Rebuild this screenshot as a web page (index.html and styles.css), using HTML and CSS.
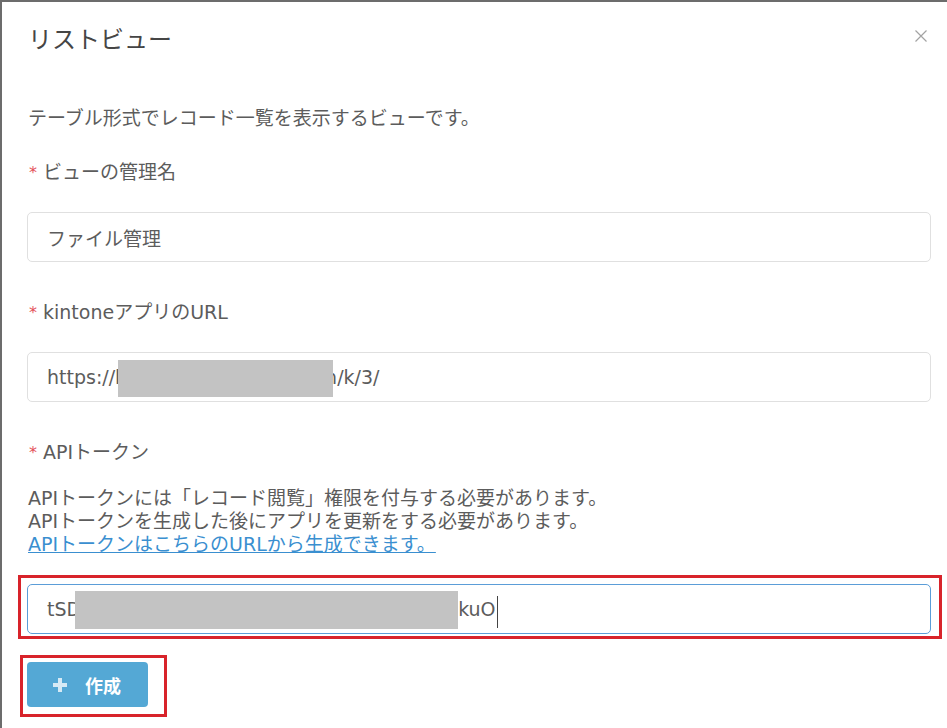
FILE: index.html
```html
<!DOCTYPE html>
<html lang="ja">
<head>
<meta charset="utf-8">
<title>リストビュー</title>
<link rel="stylesheet" href="styles.css">
</head>
<body>
<div class="modal">
  <div class="modal-header">
    <h1 class="modal-title">リストビュー</h1>
    <button class="close" aria-label="閉じる">
      <svg width="12" height="12" viewBox="0 0 12 12"><path d="M0.5 0.5 L11.5 11.5 M11.5 0.5 L0.5 11.5" stroke="#a3a3a3" stroke-width="1.2" fill="none"/></svg>
    </button>
  </div>
  <p class="desc">テーブル形式でレコード一覧を表示するビューです。</p>

  <div class="label label-first"><span class="req">*</span> ビューの管理名</div>
  <div class="field">ファイル管理</div>

  <div class="label"><span class="req">*</span> kintoneアプリのURL</div>
  <div class="field">https://k<span class="redact redact-url"></span>n/k/3/</div>

  <div class="label"><span class="req">*</span> APIトークン</div>
  <p class="help">APIトークンには「レコード閲覧」権限を付与する必要があります。<br>APIトークンを生成した後にアプリを更新をする必要があります。<br><a href="#" class="link">APIトークンはこちらのURLから生成できます。</a></p>

  <div class="annot annot-field">
    <div class="field field-focus">tSD<span class="redact redact-token"></span>kuO<span class="caret"></span></div>
  </div>

  <div class="annot annot-btn">
    <button class="btn-create">
      <svg width="16" height="16" viewBox="0 0 16 16"><path d="M8 1 V15 M1 8 H15" stroke="#d6eaf5" stroke-width="4" fill="none"/></svg>
      <span>作成</span>
    </button>
  </div>
</div>
</body>
</html>
```

FILE: styles.css
```css
html, body {
  margin: 0;
  padding: 0;
  height: 100%;
}
body {
  background: #6c6c6c;
  overflow: hidden;
  font-family: "DejaVu Sans", "Noto Sans CJK JP", sans-serif;
  color: #5c5c5c;
}
.modal {
  margin: 2px 0 0 2px;
  width: 954px;
  min-height: 780px;
  box-sizing: border-box;
  padding: 23px 25px 30px 25px;
  background: #ffffff;
}
.modal-header {
  display: flex;
  justify-content: space-between;
  align-items: flex-start;
}
.modal-title {
  margin: 0;
  font-size: 24px;
  line-height: 30px;
  font-weight: 400;
  color: #454545;
  padding-left: 1px;
}
.close {
  margin: 5px 4px 0 0;
  padding: 0;
  border: 0;
  background: none;
  width: 12px;
  height: 12px;
  display: block;
}
.close svg { display: block; }
.desc {
  margin: 51px 0 0 1px;
  font-size: 19px;
  line-height: 24px;
}
.label {
  margin-top: 38px;
  font-size: 19px;
  line-height: 24px;
  padding-left: 2px;
}
.label-first { margin-top: 30px; }
.req {
  color: #e4505a;
  font-size: 16px;
  line-height: 1;
  vertical-align: 1px;
}
.field {
  margin-top: 28px;
  height: 50px;
  box-sizing: border-box;
  border: 1px solid #e0e0e0;
  border-radius: 5px;
  padding-left: 19px;
  display: flex;
  align-items: center;
  font-size: 19px;
  color: #5c5c5c;
  white-space: pre;
}
.field-focus {
  margin-top: 0;
  border-color: #5b9dd8;
}
.redact {
  display: inline-block;
  background: #c3c3c3;
  position: relative;
}
.redact-url {
  width: 215px;
  height: 37px;
  margin-left: -8px;
  margin-right: -8px;
  margin-top: 3px;
}
.redact-token {
  width: 383px;
  height: 38px;
  margin-left: -6px;
  margin-top: 2px;
}
.caret {
  display: inline-block;
  width: 1px;
  height: 32px;
  background: #444;
  margin-left: 1px;
  margin-top: 6px;
}
.help {
  margin: 23px 0 0 1px;
  font-size: 19px;
  line-height: 23px;
}
.link {
  color: #3a8fd0;
  text-decoration: underline;
}
.annot {
  position: relative;
}
.annot::after {
  content: "";
  position: absolute;
  border: 3px solid #d8232a;
  pointer-events: none;
}
.annot-field {
  margin-top: 28px;
}
.annot-field::after {
  top: -9px;
  left: -9px;
  right: -11px;
  bottom: -5px;
}
.annot-btn {
  margin-top: 28px;
  width: 121px;
}
.annot-btn::after {
  top: -7px;
  left: -7px;
  right: -19px;
  bottom: -10px;
}
.btn-create {
  width: 121px;
  height: 45px;
  border: 0;
  border-radius: 4px;
  background: #54a8d5;
  color: #ffffff;
  display: flex;
  align-items: center;
  padding: 0 0 0 25px;
  gap: 17px;
  font-family: "DejaVu Sans", "Noto Sans CJK JP", sans-serif;
  font-size: 18px;
  font-weight: 700;
}
.btn-create svg { display: block; }
```
